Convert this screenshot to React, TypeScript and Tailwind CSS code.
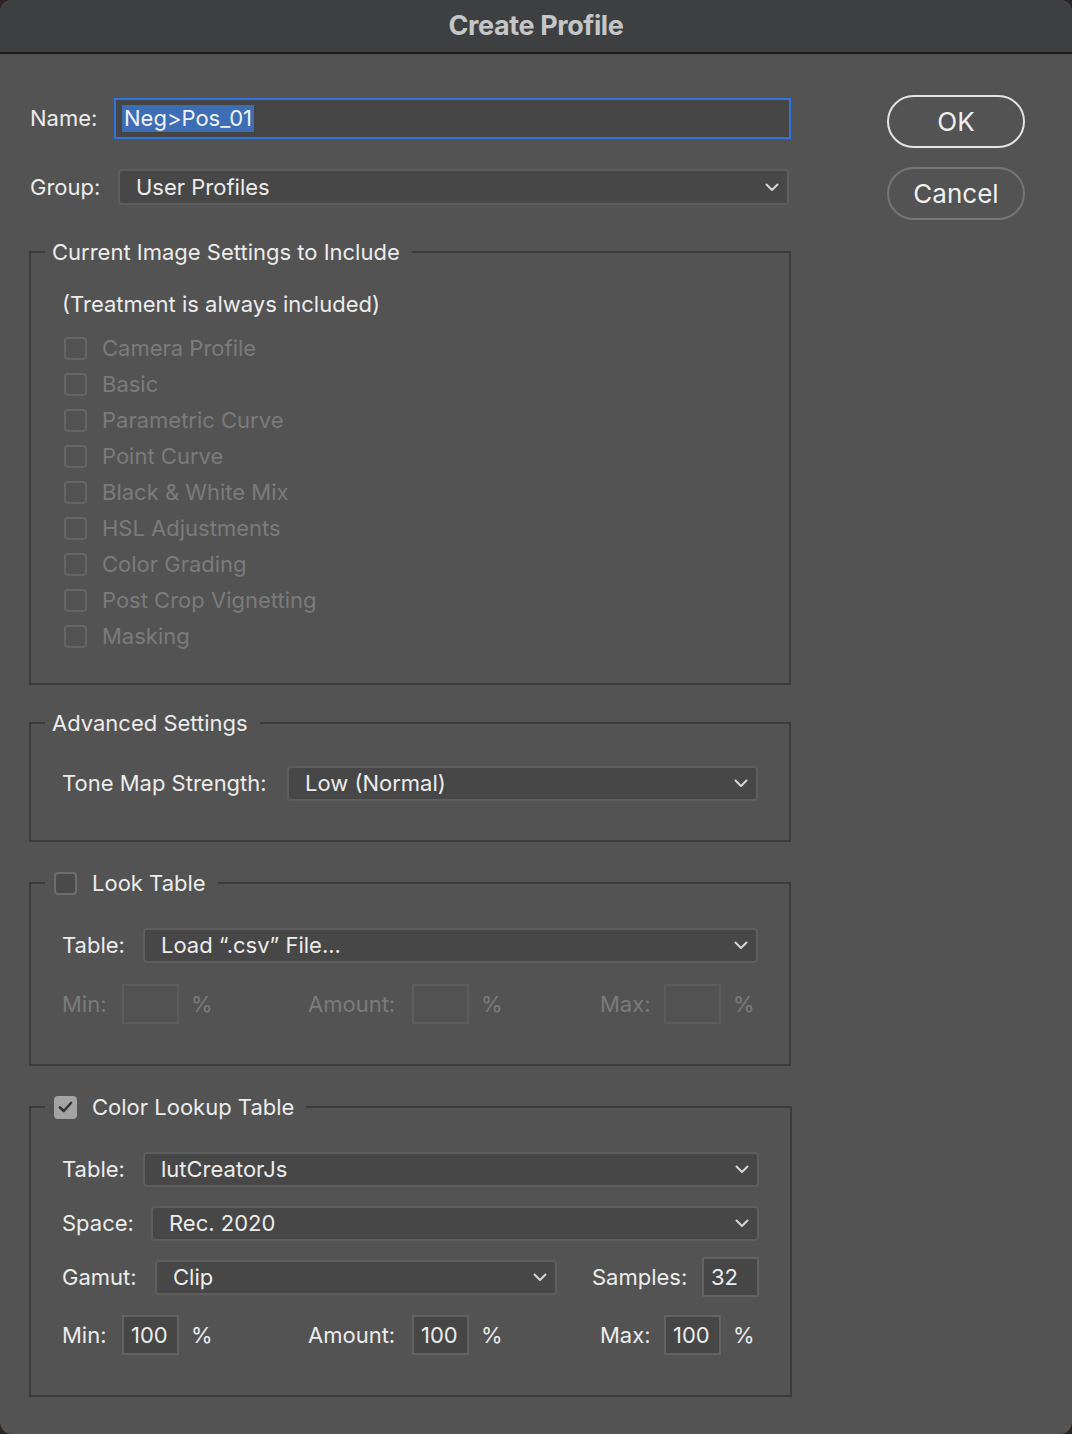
import React from "react";

const FONT = { fontFamily: "Inter, 'Noto Sans', 'Liberation Sans', sans-serif" };

function Chevron() {
  return (
    <svg width="14" height="9" viewBox="0 0 14 9" className="shrink-0">
      <path d="M1.5 1.5 L7 7 L12.5 1.5" fill="none" stroke="#d6d6d6" strokeWidth="2" strokeLinecap="round" strokeLinejoin="round" />
    </svg>
  );
}

function Select({ value, className = "" }: { value: string; className?: string }) {
  return (
    <div
      className={
        "flex h-[35px] items-center justify-between rounded-[4px] border-2 border-[#5e5e5e] bg-[#474747] pl-[16px] pr-[8px] text-[22px] text-[#ececec] " +
        className
      }
    >
      <span>{value}</span>
      <Chevron />
    </div>
  );
}

function Box({ value, disabled }: { value?: string; disabled?: boolean }) {
  return (
    <div
      className={
        "flex h-[40px] w-[57px] items-center border-2 pl-[7px] text-[22px] " +
        (disabled ? "border-[#5c5c5c] bg-[#525252]" : "border-[#626262] bg-[#464646] text-[#ececec]")
      }
    >
      {value}
    </div>
  );
}

function Check({ checked, disabled }: { checked?: boolean; disabled?: boolean }) {
  if (checked) {
    return (
      <div className="flex h-[23px] w-[23px] shrink-0 items-center justify-center rounded-[4px] bg-[#a3a3a3]">
        <svg width="15" height="12" viewBox="0 0 15 12">
          <path d="M2 6.5 L5.8 10 L13 2" fill="none" stroke="#333" strokeWidth="2.6" strokeLinecap="round" strokeLinejoin="round" />
        </svg>
      </div>
    );
  }
  return (
    <div
      className={
        "h-[23px] w-[23px] shrink-0 rounded-[4px] border-2 " +
        (disabled ? "border-[#656565] bg-[#525252]" : "border-[#6d6d6d] bg-[#4a4a4a]")
      }
    />
  );
}

function Group({
  title,
  check,
  className = "",
  children,
}: {
  title: string;
  check?: "on" | "off";
  className?: string;
  children: React.ReactNode;
}) {
  return (
    <fieldset className={"border-2 border-[#3b3b3b] " + className}>
      <legend
        className={
          "ml-[14px] flex h-[24px] items-center gap-[15px] pr-[12px] text-[22px] text-[#ececec] " +
          (check ? "pl-[9px]" : "pl-[7px]")
        }
      >
        {check && <Check checked={check === "on"} />}
        <span>{title}</span>
      </legend>
      <div className="px-[31px]">{children}</div>
    </fieldset>
  );
}

const settings = [
  "Camera Profile",
  "Basic",
  "Parametric Curve",
  "Point Curve",
  "Black & White Mix",
  "HSL Adjustments",
  "Color Grading",
  "Post Crop Vignetting",
  "Masking",
];

export default function App() {
  return (
    <div className="min-h-[1434px] w-[1072px] bg-[#2a2522]" style={FONT}>
      <div className="h-[1434px] overflow-hidden rounded-[12px] bg-[#535353]">
        <div className="flex h-[54px] items-center justify-center border-b-2 border-[#1c1c1c] bg-[#3d3f40]">
          <span className="text-[27px] font-bold tracking-[-0.4px] text-[#c4c6c7]">Create Profile</span>
        </div>

        <div className="flex pl-[29px]">
          <div className="w-[762px]">
            <div className="mt-[44px] flex items-center">
              <span className="w-[85px] pl-[1px] text-[22px] text-[#ececec]">Name:</span>
              <div className="flex h-[41px] flex-1 items-center border-2 border-[#2f74e0] bg-[#454545] pl-[6px]">
                <span className="bg-[#3d6db4] px-[2px] text-[22px] leading-[27px] text-[#f2f2f2]">Neg&gt;Pos_01</span>
              </div>
            </div>

            <div className="mt-[30px] flex items-center pr-[2px]">
              <span className="w-[89px] pl-[1px] text-[22px] text-[#ececec]">Group:</span>
              <Select value="User Profiles" className="h-[36px] flex-1" />
            </div>

            <Group title="Current Image Settings to Include" className="mt-[35px] pb-[29px]">
              <div className="mt-[22px] flex h-[36px] items-center text-[22px] text-[#ececec]">
                (Treatment is always included)
              </div>
              <div className="mt-[8px]">
                {settings.map((s) => (
                  <div key={s} className="flex h-[36px] items-center gap-[15px] pl-[2px]">
                    <Check disabled />
                    <span className="text-[22px] text-[#7b7b7b]">{s}</span>
                  </div>
                ))}
              </div>
            </Group>

            <Group title="Advanced Settings" className="mt-[26px] pb-[39px]">
              <div className="mt-[30px] flex h-[36px] items-center">
                <span className="w-[225px] text-[22px] text-[#ececec]">Tone Map Strength:</span>
                <Select value="Low (Normal)" className="flex-1" />
              </div>
            </Group>

            <Group title="Look Table" check="off" className="mt-[29px] pb-[40px]">
              <div className="mt-[32px] flex h-[36px] items-center">
                <span className="w-[81px] text-[22px] text-[#ececec]">Table:</span>
                <Select value="Load “.csv” File..." className="flex-1" />
              </div>
              <div className="mt-[21px] flex items-center text-[22px] text-[#7b7b7b]">
                <span className="w-[60px]">Min:</span>
                <Box disabled />
                <span className="ml-[12px] w-[117px]">%</span>
                <span className="w-[104px]">Amount:</span>
                <Box disabled />
                <span className="ml-[12px] w-[119px]">%</span>
                <span className="w-[64px]">Max:</span>
                <Box disabled />
                <span className="ml-[12px]">%</span>
              </div>
            </Group>

            <Group title="Color Lookup Table" check="on" className="mt-[29px] pb-[40px]">
              <div className="mt-[33px] flex h-[35px] items-center">
                <span className="w-[81px] text-[22px] text-[#ececec]">Table:</span>
                <Select value="lutCreatorJs" className="flex-1" />
              </div>
              <div className="mt-[19px] flex h-[35px] items-center">
                <span className="w-[89px] text-[22px] text-[#ececec]">Space:</span>
                <Select value="Rec. 2020" className="flex-1" />
              </div>
              <div className="mt-[16px] flex items-center">
                <span className="w-[93px] text-[22px] text-[#ececec]">Gamut:</span>
                <Select value="Clip" className="w-[402px]" />
                <span className="ml-[35px] w-[110px] text-[22px] text-[#ececec]">Samples:</span>
                <Box value="32" />
              </div>
              <div className="mt-[18px] flex items-center text-[22px] text-[#ececec]">
                <span className="w-[60px]">Min:</span>
                <Box value="100" />
                <span className="ml-[12px] w-[117px]">%</span>
                <span className="w-[104px]">Amount:</span>
                <Box value="100" />
                <span className="ml-[12px] w-[119px]">%</span>
                <span className="w-[64px]">Max:</span>
                <Box value="100" />
                <span className="ml-[12px]">%</span>
              </div>
            </Group>
          </div>

          <div className="ml-[96px] flex w-[138px] flex-col gap-[19px] pt-[41px]">
            <button className="h-[53px] rounded-full border-2 border-[#e4e4e4] text-[26px] text-[#f0f0f0]">OK</button>
            <button className="h-[53px] rounded-full border-2 border-[#767676] text-[26px] text-[#f0f0f0]">Cancel</button>
          </div>
        </div>
      </div>
    </div>
  );
}
